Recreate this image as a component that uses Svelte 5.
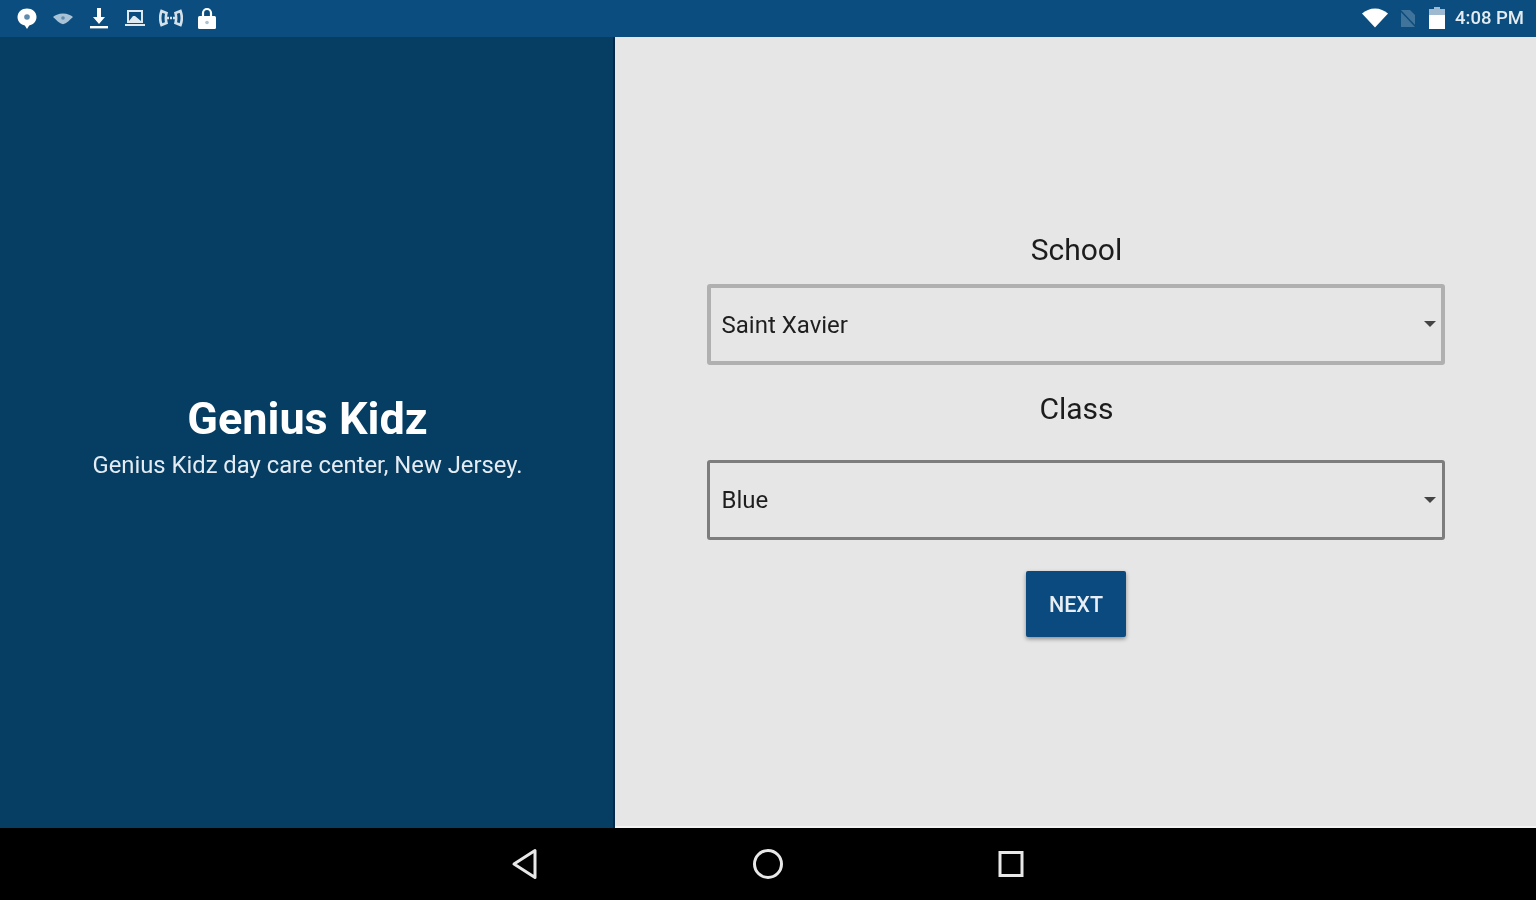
<script>
  let school = 'Saint Xavier'
  let className = 'Blue'
</script>

<div class="screen">
  <header class="status">
    <div class="icons">
      <svg width="24" height="24" viewBox="0 0 24 24"><path fill="#fff" d="M12 2.500c-5 0-9.500 3.400-9.500 8.600 0 4.600 3.500 7.600 7.300 8.500L12 23l2.200-3.400c3.800-.9 7.300-3.900 7.300-8.500 0-5.200-4.500-8.600-9.500-8.600z"/><circle cx="12" cy="11" r="2.800" fill="#5d8bad"/></svg>
      <svg width="24" height="24" viewBox="0 0 24 24"><path fill="#a9c2d6" d="M12 7.500c-4.500 0-8.300 1.900-10 3.600l2.500 2.200 2.300 2.100 2.600 1.900 2.600 1 2.600-1 2.600-1.900 2.300-2.100 2.500-2.200C20.300 9.400 16.500 7.500 12 7.500z"/><circle cx="12" cy="12" r="1.800" fill="#5d8bad"/></svg>
      <svg width="24" height="24" viewBox="0 0 24 24"><path fill="#fff" d="M10 2h4v9h4l-6 7-6-7h4z"/><rect x="3" y="20" width="18" height="2.400" fill="#fff"/></svg>
      <svg width="24" height="24" viewBox="0 0 24 24"><path fill="#dfe9f0" d="M4 4h16v13H4zm2 2v9h12V6z"/><path fill="#dfe9f0" d="M6 15l4-5h2l6 5zM2 18h20v2H2z"/></svg>
      <svg width="24" height="24" viewBox="0 0 24 24"><g fill="none" stroke="#d4e0ea" stroke-width="2.600"><path d="M2.500 5c-1.500 4-1.500 10 0 14l5-2c-.8-3-.8-7 0-10z"/><path d="M21.500 5c1.500 4 1.500 10 0 14l-5-2c.8-3 .8-7 0-10z"/><path d="M8 12h8" stroke-dasharray="2 1"/></g></svg>
      <svg width="24" height="24" viewBox="0 0 24 24"><path fill="none" stroke="#fff" stroke-width="2.200" d="M8 11V7a4 4 0 0 1 8 0v4"/><rect x="3" y="10" width="18" height="13" rx="1.500" fill="#fff"/><circle cx="12" cy="16.500" r="1.800" fill="#a9c2d6"/></svg>
    </div>
    <div class="tray">
      <svg width="28" height="24" viewBox="0 0 28 24"><path fill="#fff" d="M14 21.500L1 7.500C4.500 4.500 9 2.500 14 2.500s9.500 2 13 5z"/></svg>
      <svg class="sim" width="20" height="24" viewBox="0 0 20 24"><path fill="#41749b" d="M3 4h9l5 5v12H3z"/><path stroke="#0a4d7e" stroke-width="1.500" d="M1 3l17 18"/></svg>
      <svg class="batt" width="18" height="26" viewBox="0 0 18 26"><path fill="#9fbad0" d="M6 2h6v2h5v6H1V4h5z"/><rect x="1" y="10" width="16" height="14" fill="#fff"/></svg>
      <span class="time">4:08 PM</span>
    </div>
  </header>

  <main class="content">
    <section class="brand">
      <h1>Genius Kidz</h1>
      <p>Genius Kidz day care center, New Jersey.</p>
    </section>
    <section class="form">
      <div class="label school">School</div>
      <div class="select light">
        <span>{school}</span>
        <i class="caret"></i>
      </div>
      <div class="label class-label">Class</div>
      <div class="select dark">
        <span>{className}</span>
        <i class="caret"></i>
      </div>
      <button class="next">NEXT</button>
    </section>
  </main>

  <footer class="nav">
    <svg width="32" height="36" viewBox="0 0 32 36"><path fill="none" stroke="#e8e8e8" stroke-width="3" stroke-linejoin="round" d="M5 18L26 4.500v27z"/></svg>
    <svg width="32" height="32" viewBox="0 0 32 32"><circle cx="16" cy="16" r="13.500" fill="none" stroke="#e8e8e8" stroke-width="3"/></svg>
    <svg width="32" height="32" viewBox="0 0 32 32"><rect x="5" y="4.500" width="22" height="23" fill="none" stroke="#e8e8e8" stroke-width="3"/></svg>
  </footer>
</div>

<style>
  :global(body) {
    margin: 0;
    background: #000;
  }

  .screen {
    width: 1536px;
    height: 900px;
    display: flex;
    flex-direction: column;
    font-family: Roboto, "Liberation Sans", sans-serif;
    overflow: hidden;
    /* reference is an upscaled low-res capture */
    filter: blur(0.7px);
  }

  .status {
    height: 37px;
    flex: none;
    display: flex;
    justify-content: space-between;
    align-items: center;
    background: #0a4d7e;
    padding: 0 12px 2px 15px;
    box-sizing: border-box;
  }

  .icons {
    display: flex;
    align-items: center;
    gap: 12px;
  }

  .tray {
    display: flex;
    align-items: center;
  }

  .sim {
    margin-left: 9px;
  }

  .batt {
    margin-left: 10px;
  }

  .time {
    margin-left: 9px;
    color: #e4ecf2;
    font-size: 18.5px;
    font-weight: 500;
  }

  .content {
    flex: 1;
    display: flex;
    min-height: 0;
  }

  .brand {
    width: 615px;
    flex: none;
    background: #053d63;
    border-right: 2px solid #04284a;
    box-sizing: border-box;
    color: #fff;
    display: flex;
    flex-direction: column;
    align-items: center;
    justify-content: center;
    padding: 9px 0 0 2px;
  }

  .brand h1 {
    margin: 0;
    font-size: 45px;
    font-weight: 700;
    line-height: 50px;
  }

  .brand p {
    margin: 5px 0 0;
    font-size: 23.8px;
    line-height: 32px;
    color: #e4ecf2;
  }

  .form {
    flex: 1;
    background: #e6e6e6;
    border-bottom: 2px solid #f4f4f4;
    display: flex;
    flex-direction: column;
    align-items: center;
    justify-content: center;
    padding-top: 4px;
  }

  .label {
    font-size: 30px;
    line-height: 36px;
    color: #1c1c1c;
    padding: 1px 0 0 2px;
  }

  .school {
    margin-bottom: 16px;
  }

  .class-label {
    margin: 25px 0 33px;
  }

  .select {
    width: 738px;
    height: 81px;
    box-sizing: border-box;
    border: 4px solid #b0b0b0;
    border-radius: 3px;
    display: flex;
    align-items: center;
    justify-content: space-between;
    padding: 0 5px 0 11px;
    font-size: 24px;
    color: #1e1e1e;
  }

  .select.light span {
    padding-top: 2px;
  }

  .select.dark {
    height: 80px;
    border-color: #7d7d7d;
    border-width: 3px;
    padding-left: 12px;
    padding-right: 6px;
  }

  .caret {
    border-left: 6px solid transparent;
    border-right: 6px solid transparent;
    border-top: 6px solid #444;
  }

  .next {
    width: 100px;
    height: 66px;
    margin-top: 31px;
    border: 0;
    border-radius: 2px;
    padding: 2px 0 0 1px;
    background: #0a4a7f;
    color: #e8eef3;
    font-family: inherit;
    font-size: 21.5px;
    font-weight: 500;
    box-shadow: 0 2px 4px rgba(0, 0, 0, 0.4);
  }

  .nav {
    height: 72px;
    flex: none;
    background: #000;
    display: flex;
    align-items: center;
    justify-content: center;
    gap: 211px;
  }
</style>
